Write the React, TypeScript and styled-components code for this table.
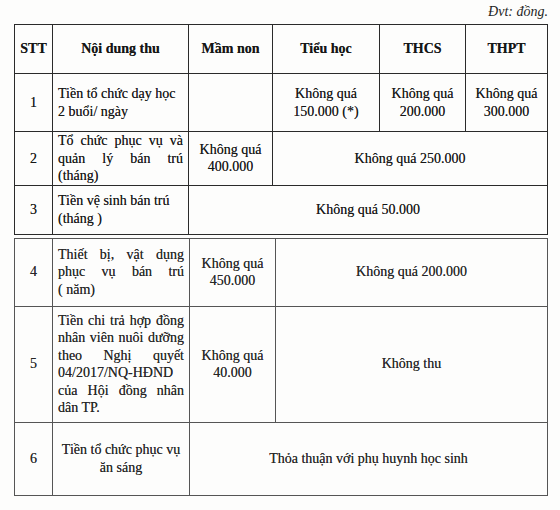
import styled, { createGlobalStyle } from "styled-components";

const GlobalStyle = createGlobalStyle`
  html, body {
    margin: 0;
    padding: 0;
    background: #fdfdfc;
  }
  body {
    font-family: "Liberation Serif", "Times New Roman", serif;
    color: #1f1f1f;
  }
`;

const Page = styled.div`
  width: 560px;
  height: 510px;
  box-sizing: border-box;
  padding: 3px 12px 0 14px;
  display: flex;
  flex-direction: column;
`;

const Unit = styled.div`
  align-self: flex-end;
  font-style: italic;
  font-size: 14px;
  line-height: 17px;
  height: 21px;
`;

const Table = styled.table<{ $tone?: "dark" | "light"; $gap?: number }>`
  width: 533px;
  border-collapse: collapse;
  table-layout: fixed;
  margin-top: ${(p) => p.$gap ?? 0}px;
  font-size: 14px;
  line-height: 17.5px;
  color: ${(p) => (p.$tone === "light" ? "#262626" : "#161616")};
  text-shadow: 0 0 0.3px rgba(0, 0, 0, 0.6);

  td, th {
    border: 1.5px solid ${(p) => (p.$tone === "light" ? "#555" : "#2a2a2a")};
    padding: 0 5px;
    vertical-align: middle;
  }
`;

const Row = styled.tr<{ $h: number }>`
  height: ${(p) => p.$h}px;
`;

const Head = styled.th`
  font-weight: bold;
  text-align: center;
`;

const Cell = styled.td<{ $align?: "left" | "center" }>`
  text-align: ${(p) => p.$align ?? "center"};
`;

const Line = styled.div<{ $justify?: boolean }>`
  text-align: ${(p) => (p.$justify ? "justify" : "inherit")};
  text-align-last: ${(p) => (p.$justify ? "justify" : "auto")};
  white-space: nowrap;
`;

const Lines = ({ lines, justify = [] }: { lines: string[]; justify?: number[] }) => (
  <>
    {lines.map((l, i) => (
      <Line key={i} $justify={justify.includes(i)}>
        {l}
      </Line>
    ))}
  </>
);

const Amount = ({ value }: { value: string }) => (
  <Lines lines={["Không quá", value]} />
);

export default function App() {
  return (
    <Page>
      <GlobalStyle />
      <Unit>Đvt: đồng.</Unit>

      <Table>
        <colgroup>
          <col style={{ width: 38 }} />
          <col style={{ width: 136 }} />
          <col style={{ width: 84 }} />
          <col style={{ width: 107 }} />
          <col style={{ width: 86 }} />
          <col style={{ width: 82 }} />
        </colgroup>
        <tbody>
          <Row $h={49}>
            <Head>STT</Head>
            <Head>Nội dung thu</Head>
            <Head>Mầm non</Head>
            <Head>Tiểu học</Head>
            <Head>THCS</Head>
            <Head>THPT</Head>
          </Row>
          <Row $h={58}>
            <Cell>1</Cell>
            <Cell $align="left">
              <Lines lines={["Tiền tổ chức dạy học", "2 buổi/ ngày"]} />
            </Cell>
            <Cell />
            <Cell>
              <Amount value="150.000 (*)" />
            </Cell>
            <Cell>
              <Amount value="200.000" />
            </Cell>
            <Cell>
              <Amount value="300.000" />
            </Cell>
          </Row>
          <Row $h={51}>
            <Cell>2</Cell>
            <Cell $align="left">
              <Lines
                lines={["Tổ chức phục vụ và", "quản lý bán trú", "(tháng)"]}
                justify={[0, 1]}
              />
            </Cell>
            <Cell>
              <Amount value="400.000" />
            </Cell>
            <Cell colSpan={3}>Không quá 250.000</Cell>
          </Row>
          <Row $h={49}>
            <Cell>3</Cell>
            <Cell $align="left">
              <Lines lines={["Tiền vệ sinh bán trú", "(tháng )"]} />
            </Cell>
            <Cell colSpan={4}>Không quá 50.000</Cell>
          </Row>
        </tbody>
      </Table>

      <Table $tone="light" $gap={3}>
        <colgroup>
          <col style={{ width: 38 }} />
          <col style={{ width: 137 }} />
          <col style={{ width: 86 }} />
          <col style={{ width: 272 }} />
        </colgroup>
        <tbody>
          <Row $h={68}>
            <Cell>4</Cell>
            <Cell $align="left">
              <Lines
                lines={["Thiết bị, vật dụng", "phục vụ bán trú", "( năm)"]}
                justify={[0, 1]}
              />
            </Cell>
            <Cell>
              <Amount value="450.000" />
            </Cell>
            <Cell>Không quá 200.000</Cell>
          </Row>
          <Row $h={116}>
            <Cell>5</Cell>
            <Cell $align="left">
              <Lines
                lines={[
                  "Tiền chi trả hợp đồng",
                  "nhân viên nuôi dưỡng",
                  "theo Nghị quyết",
                  "04/2017/NQ-HĐND",
                  "của Hội đồng nhân",
                  "dân TP.",
                ]}
                justify={[0, 1, 2, 3, 4]}
              />
            </Cell>
            <Cell>
              <Amount value="40.000" />
            </Cell>
            <Cell>Không thu</Cell>
          </Row>
          <Row $h={73}>
            <Cell>6</Cell>
            <Cell>
              <Lines lines={["Tiền tổ chức phục vụ", "ăn sáng"]} />
            </Cell>
            <Cell colSpan={2}>Thỏa thuận với phụ huynh học sinh</Cell>
          </Row>
        </tbody>
      </Table>
    </Page>
  );
}
